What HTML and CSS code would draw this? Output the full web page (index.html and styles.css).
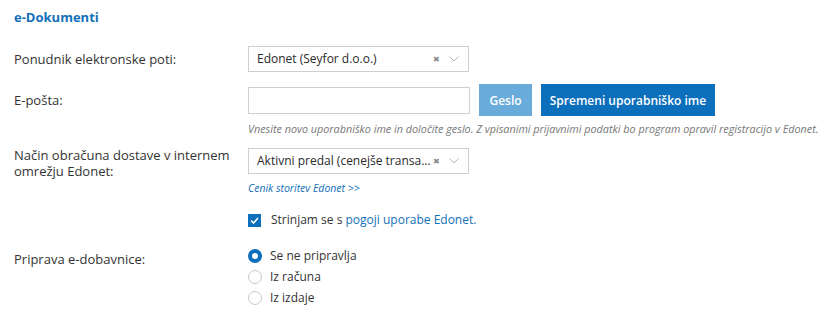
FILE: index.html
```html
<!DOCTYPE html>
<html lang="sl">
<head>
<meta charset="utf-8">
<title>e-Dokumenti</title>
<link rel="stylesheet" href="styles.css">
</head>
<body>
<div class="page">
  <h2 class="title">e-Dokumenti</h2>

  <div class="row row-provider">
    <div class="label">Ponudnik elektronske poti:</div>
    <div class="ctrl">
      <div class="select">
        <span class="select-value">Edonet (Seyfor d.o.o.)</span>
        <span class="select-clear">&#x2716;</span>
        <svg class="select-arrow" width="10" height="6" viewBox="0 0 10 6"><path d="M0.5 0.5 L5 5 L9.5 0.5" fill="none" stroke="#b5b5b5" stroke-width="1"/></svg>
      </div>
    </div>
  </div>

  <div class="row row-email">
    <div class="label">E-pošta:</div>
    <div class="ctrl ctrl-inline">
      <input class="input" type="text">
      <button class="btn btn-light">Geslo</button>
      <button class="btn btn-primary">Spremeni uporabniško ime</button>
    </div>
  </div>
  <div class="hint">Vnesite novo uporabniško ime in določite geslo. Z vpisanimi prijavnimi podatki bo program opravil registracijo v Edonet.</div>

  <div class="row row-delivery">
    <div class="label label-multi">Način obračuna dostave v internem omrežju Edonet:</div>
    <div class="ctrl ctrl-stack">
      <div class="select">
        <span class="select-value">Aktivni predal (cenejše transakcije)</span>
        <span class="select-clear">&#x2716;</span>
        <svg class="select-arrow" width="10" height="6" viewBox="0 0 10 6"><path d="M0.5 0.5 L5 5 L9.5 0.5" fill="none" stroke="#b5b5b5" stroke-width="1"/></svg>
      </div>
      <a class="price-link" href="#">Cenik storitev Edonet &gt;&gt;</a>
    </div>
  </div>

  <div class="row row-agree">
    <div class="label"></div>
    <div class="ctrl">
      <label class="check">
        <span class="checkbox"><svg width="9" height="7" viewBox="0 0 9 7"><path d="M1 3.5 L3.5 6 L8 1" fill="none" stroke="#fff" stroke-width="1.6"/></svg></span>
        <span>Strinjam se s <a class="terms" href="#">pogoji uporabe Edonet.</a></span>
      </label>
    </div>
  </div>

  <div class="row row-radio">
    <div class="label label-radio">Priprava e-dobavnice:</div>
    <div class="ctrl ctrl-stack">
      <label class="radio"><span class="dot dot-on"></span><span>Se ne pripravlja</span></label>
      <label class="radio"><span class="dot"></span><span>Iz računa</span></label>
      <label class="radio"><span class="dot"></span><span>Iz izdaje</span></label>
    </div>
  </div>
</div>
</body>
</html>
```
FILE: styles.css
```css
* { box-sizing: border-box; }
html, body { margin: 0; padding: 0; background: #fff; }
body {
  font-family: "Open Sans", "Liberation Sans", sans-serif;
  font-size: 13px;
  color: #333;
}
.page { padding: 8px 0 0 14px; }
.title {
  margin: 0;
  font-size: 13px;
  line-height: 18px;
  font-weight: 700;
  color: #1470b8;
}
.row { display: flex; align-items: center; }
.label { width: 234px; flex: none; line-height: 18px; }
.ctrl { display: flex; }
.ctrl-inline { align-items: center; }
.ctrl-stack { flex-direction: column; align-items: flex-start; }

.row-provider { margin-top: 20px; }
.select {
  width: 221px;
  height: 26px;
  border: 1px solid #cfcfcf;
  display: flex;
  align-items: center;
  padding: 0 9px 0 8px;
  background: #fff;
  font-size: 12px;
}
.select-value {
  flex: 1;
  min-width: 0;
  white-space: nowrap;
  overflow: hidden;
  text-overflow: ellipsis;
  line-height: 18px;
  color: #2a2a2a;
}
.select-clear {
  font-size: 8px;
  color: #8a8a8a;
  margin: 0 9px 0 2px;
  line-height: 1;
}
.select-arrow { flex: none; }

.row-email { margin-top: 12px; height: 32px; }
.input {
  width: 222px;
  height: 27px;
  border: 1px solid #cfcfcf;
  margin: 0;
  padding: 0 8px;
  font: inherit;
}
.btn {
  height: 32px;
  border: none;
  margin: 0;
  color: #fff;
  font-family: "Open Sans", "Liberation Sans", sans-serif;
  font-size: 12px;
  font-weight: 600;
  padding: 0;
}
.btn-light { background: #69acdc; margin-left: 9px; width: 53px; }
.btn-primary { background: #0b6fbb; margin-left: 9px; width: 174px; }

.hint {
  margin: 6px 0 0 234px;
  font-size: 10.8px;
  line-height: 14px;
  font-style: italic;
  color: #777;
  white-space: nowrap;
}

.row-delivery { margin-top: 11px; align-items: flex-start; }
.label-multi { line-height: 16px; }
.row-delivery .select { margin-top: 1px; }
.price-link {
  margin-top: 7px;
  font-size: 10.5px;
  line-height: 14px;
  font-style: italic;
  color: #1470b8;
  text-decoration: none;
}

.row-agree { margin-top: 16px; }
.check { display: flex; align-items: center; line-height: 18px; font-size: 12px; }
.checkbox {
  width: 13px;
  height: 13px;
  background: #0b6fbb;
  display: flex;
  align-items: center;
  justify-content: center;
  margin-right: 10px;
}
.terms { color: #1470b8; text-decoration: none; }

.row-radio { margin-top: 16px; align-items: flex-start; }
.label-radio { padding-top: 5px; }
.radio {
  display: flex;
  align-items: center;
  height: 21px;
  line-height: 18px;
  font-size: 12px;
}
.dot {
  width: 14px;
  height: 14px;
  border-radius: 50%;
  border: 1px solid #c8c8c8;
  background: #fff;
  margin-right: 8px;
}
.dot-on { border: 4px solid #0b6fbb; }
```
